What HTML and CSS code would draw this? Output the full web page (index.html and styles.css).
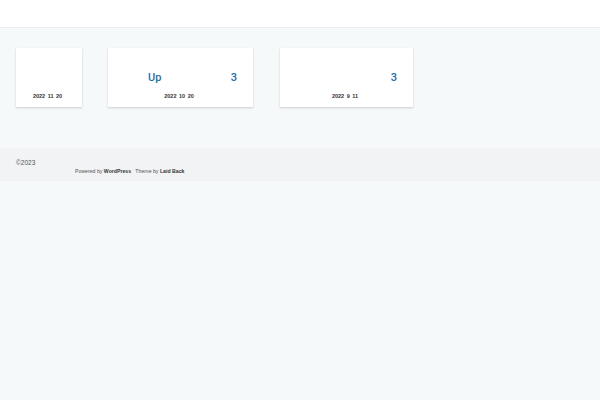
FILE: index.html
```html
<!DOCTYPE html>
<html lang="en">
<head>
<meta charset="utf-8">
<title>Archive</title>
<link rel="stylesheet" href="styles.css">
</head>
<body>
<header class="site-header"></header>
<main class="content">
  <div class="cards">
    <article class="card card-a">
      <div class="card-title"><span class="t-left"></span><span class="t-count"></span></div>
      <div class="card-date">2022 11 20</div>
    </article>
    <article class="card card-b">
      <div class="card-title"><span class="t-left">Up</span><span class="t-count">3</span></div>
      <div class="card-date">2022 10 20</div>
    </article>
    <article class="card card-c">
      <div class="card-title"><span class="t-left"></span><span class="t-count">3</span></div>
      <div class="card-date">2022 9 11</div>
    </article>
  </div>
</main>
<footer class="site-footer">
  <div class="copy">&copy;2023</div>
  <div class="credit">Powered by <b>WordPress</b> &nbsp; Theme by <b>Laid Back</b></div>
</footer>
</body>
</html>
```
FILE: styles.css
```css
* { box-sizing: border-box; }
html, body { margin: 0; padding: 0; }
body {
  background: #f6f9fa;
  font-family: "Liberation Sans", Arial, sans-serif;
  color: #333;
  min-height: 400px;
}
.site-header {
  height: 28px;
  background: #ffffff;
  border-bottom: 1px solid #ebeef0;
}
.content {
  padding: 20px 16px 41px;
}
.cards {
  display: flex;
  align-items: flex-start;
  gap: 26px;
}
.card {
  background: #fff;
  height: 59px;
  box-shadow: 0 1px 2px rgba(0,0,0,0.18);
  padding-top: 23px;
  font-family: Roboto, "Liberation Sans", sans-serif;
}
.card-a { width: 66px; }
.card-b { width: 145px; margin-right: 1px; }
.card-c { width: 133px; }
.card-title {
  display: flex;
  justify-content: space-between;
  align-items: baseline;
  height: 14px;
  line-height: 14px;
  font-size: 11px;
  font-weight: 500;
  color: #1e6fa5;
  padding: 0 16px 0 40px;
}
.card-date {
  margin-top: 8px;
  text-align: center;
  font-size: 5.5px;
  font-weight: 700;
  word-spacing: 1px;
  color: #333;
  padding-right: 3px;
  font-family: "Liberation Sans", Arial, sans-serif;
}
.site-footer {
  background: #f2f3f5;
  height: 33px;
  padding: 11px 16px 0;
  color: #555;
}
.copy {
  font-size: 6.5px;
  line-height: 8px;
}
.credit {
  font-size: 5.2px;
  line-height: 8px;
  padding-left: 59px;
  color: #555;
}
.credit b { color: #333; }
```
